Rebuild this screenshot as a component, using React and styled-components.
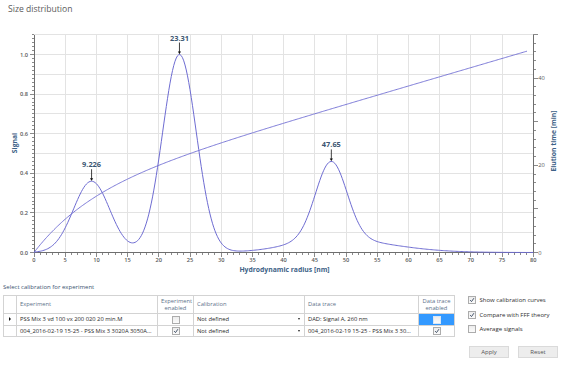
import React, { useMemo } from 'react';
import styled, { createGlobalStyle } from 'styled-components';

const Global = createGlobalStyle`
  html, body { margin: 0; padding: 0; background: #fff; }
  body { font-family: "Open Sans", "Noto Sans", sans-serif; }
`;

const Page = styled.div`
  width: 564px;
  height: 366px;
  overflow: hidden;
  background: #fff;
  display: flex;
  flex-direction: column;
`;

const Title = styled.div`
  height: 20px;
  line-height: 18px;
  padding-left: 8px;
  font-size: 8.6px;
  color: #5b5b5b;
`;

const Chart = styled.svg`
  display: block;
  width: 564px;
  height: 262px;
  flex: none;
`;

const Bottom = styled.div`
  display: flex;
  padding-left: 3px;
`;

const LeftPane = styled.div`
  width: 451px;
  display: flex;
  flex-direction: column;
`;

const SectionLabel = styled.div`
  height: 10px;
  line-height: 10px;
  margin-bottom: 3px;
  font-size: 6px;
  color: #3a5470;
`;

const Table = styled.table`
  border-collapse: collapse;
  table-layout: fixed;
  width: 451px;
  font-size: 5.8px;
  color: #1f1f1f;
`;

const Col = styled.col`
  width: ${(p) => p.$w}px;
`;

const HeadCell = styled.th`
  height: 17px;
  padding: 0 3px;
  border: 1px solid #d3d3d3;
  font-weight: normal;
  color: #5d7189;
  line-height: 7px;
  text-align: ${(p) => (p.$center ? 'center' : 'left')};
  vertical-align: middle;
`;

const Cell = styled.td`
  height: 10.7px;
  padding: 0 3px;
  border: 1px solid #d3d3d3;
  white-space: nowrap;
  overflow: hidden;
  text-overflow: clip;
  background: ${(p) => (p.$selected ? '#3399ff' : '#fff')};
  text-align: ${(p) => (p.$center ? 'center' : 'left')};
  vertical-align: middle;
  line-height: 8px;
`;

const RowHeadCell = styled(Cell)`
  padding: 0;
  text-align: center;
  font-size: 5px;
`;

const ComboInner = styled.div`
  display: flex;
  align-items: center;
  justify-content: space-between;
`;

const ComboArrow = styled.span`
  width: 0;
  height: 0;
  border-left: 1.6px solid transparent;
  border-right: 1.6px solid transparent;
  border-top: 2.2px solid #222;
  margin-right: 1px;
`;

const RowMarker = styled.span`
  display: inline-block;
  width: 0;
  height: 0;
  border-top: 2px solid transparent;
  border-bottom: 2px solid transparent;
  border-left: 2.6px solid #111;
`;

const BoxWrap = styled.span`
  display: inline-flex;
  align-items: center;
  justify-content: center;
  width: 6px;
  height: 6px;
  border: 1px solid ${(p) => (p.$onBlue ? '#d8e6f5' : '#acacac')};
  background: linear-gradient(#ececec, #fbfbfb);
  vertical-align: middle;
`;

const Options = styled.div`
  display: flex;
  flex-direction: column;
  margin-left: 14px;
  padding-top: 10.5px;
`;

const OptionRow = styled.label`
  display: flex;
  align-items: center;
  gap: 3.5px;
  height: 14.8px;
  font-size: 6px;
  color: #2d2d2d;
`;

const Buttons = styled.div`
  display: flex;
  gap: 9px;
  margin-top: 9.5px;
  margin-left: 1px;
`;

const Button = styled.button`
  width: 40px;
  height: 12px;
  padding: 0;
  border: 1px solid #dadada;
  background: #ededed;
  color: #555;
  font-family: inherit;
  font-size: 6px;
  line-height: 10px;
`;

function CheckBox({ checked, onBlue }) {
  return (
    <BoxWrap $onBlue={onBlue}>
      {checked && (
        <svg width="6" height="6" viewBox="0 0 6 6">
          <path d="M1.1 3.1 L2.5 4.6 L4.9 1.2" fill="none" stroke="#34455e" strokeWidth="0.9" />
        </svg>
      )}
    </BoxWrap>
  );
}

// chart geometry (page coordinates)
const X0 = 34;
const XS = 6.24;
const Y0 = 252.5;
const YS = 198;
const TS = 4.36;
const sx = (r) => X0 + r * XS;
const sy = (v) => Y0 - v * YS;
const st = (t) => Y0 - t * TS;
const TOP = sy(1.1);
const RIGHT = sx(80);

const g = (r, c, s) => Math.exp(-((r - c) * (r - c)) / (2 * s * s));
function signal(r) {
  const d = r - 47.65;
  const p3 = 0.39 * g(r, 47.65, 2.5) + 0.07 * Math.exp(-(d * d) / (2 * Math.pow(d < 0 ? 6.5 : 9, 2)));
  return 0.36 * g(r, 9.226, 2.9) + 1.0 * g(r, 23.31, 2.7) + p3;
}
function elution(r) {
  return 0.42 * r + 13 * (1 - Math.exp(-r / 9));
}

const GRID = '#e3e3e3';
const AXIS = '#6e6e6e';
const CURVE = '#6e6cd2';
const TICKTXT = '#5a5a5a';
const AXTITLE = '#3d6287';

function PeakLabel({ r, v, text, dy = 14 }) {
  const x = sx(r);
  const py = sy(v);
  const ty = py - dy;
  return (
    <g>
      <text x={x} y={ty} textAnchor="middle" fontSize="7.4" fontWeight="700" fill="#3c5672">
        {text}
      </text>
      <line x1={x} y1={ty + 2} x2={x} y2={py - 1} stroke="#111" strokeWidth="0.8" />
      <path d={`M${x - 1.6} ${py - 3} L${x + 1.6} ${py - 3} L${x} ${py - 0.4} Z`} fill="#111" />
    </g>
  );
}

function SizeChart() {
  const { sigPath, eluPath } = useMemo(() => {
    const s = [];
    const e = [];
    for (let i = 0; i <= 400; i++) {
      const r = i * 0.2;
      s.push(`${i ? 'L' : 'M'}${sx(r).toFixed(2)} ${sy(signal(r)).toFixed(2)}`);
      if (r <= 79) e.push(`${i ? 'L' : 'M'}${sx(r).toFixed(2)} ${st(elution(r)).toFixed(2)}`);
    }
    return { sigPath: s.join(''), eluPath: e.join('') };
  }, []);

  const vGrid = [];
  for (let r = 5; r < 80; r += 5) vGrid.push(r);
  const hGrid = [];
  for (let k = 1; k <= 11; k++) hGrid.push(k / 10);

  const leftTicks = [];
  for (let k = 0; k <= 55; k++) leftTicks.push(k);
  const bottomTicks = [];
  for (let k = 0; k <= 80; k++) bottomTicks.push(k);
  const rightTicks = [];
  for (let k = 0; k <= 50; k += 2) rightTicks.push(k);

  return (
    <Chart viewBox="0 20 564 262">
      <g shapeRendering="crispEdges">
        {vGrid.map((r) => (
          <line key={'v' + r} x1={sx(r)} y1={TOP} x2={sx(r)} y2={Y0} stroke={GRID} strokeWidth="1" />
        ))}
        {hGrid.map((v) => (
          <line key={'h' + v} x1={X0} y1={sy(v)} x2={RIGHT} y2={sy(v)} stroke={GRID} strokeWidth="1" />
        ))}
        <line x1={X0} y1={TOP} x2={X0} y2={Y0} stroke={AXIS} strokeWidth="1" />
        <line x1={X0} y1={Y0} x2={RIGHT} y2={Y0} stroke={AXIS} strokeWidth="1" />
        <line x1={RIGHT} y1={TOP} x2={RIGHT} y2={Y0} stroke={AXIS} strokeWidth="1" />
        {leftTicks.map((k) => (
          <line key={'lt' + k} x1={X0 - (k % 10 === 0 ? 4 : 2.5)} y1={sy(k * 0.02)} x2={X0} y2={sy(k * 0.02)} stroke={AXIS} strokeWidth="0.8" />
        ))}
        {bottomTicks.map((k) => (
          <line key={'bt' + k} x1={sx(k)} y1={Y0} x2={sx(k)} y2={Y0 + (k % 5 === 0 ? 4 : 2.5)} stroke={AXIS} strokeWidth="0.8" />
        ))}
        {rightTicks.map((k) => (
          <line key={'rt' + k} x1={RIGHT} y1={st(k)} x2={RIGHT + (k % 10 === 0 ? 4.5 : 3)} y2={st(k)} stroke={AXIS} strokeWidth="0.8" />
        ))}
      </g>

      {[0, 0.2, 0.4, 0.6, 0.8, 1.0].map((v) => (
        <text key={'ll' + v} x={28} y={sy(v) + 2} textAnchor="end" fontSize="5.7" fontWeight="600" fill={TICKTXT}>
          {v.toFixed(1)}
        </text>
      ))}
      {vGrid.concat([0, 80]).map((r) => (
        <text key={'bl' + r} x={sx(r)} y={262.3} textAnchor="middle" fontSize="5.7" fontWeight="600" fill={TICKTXT}>
          {r}
        </text>
      ))}
      {[0, 20, 40].map((t) => (
        <text key={'rl' + t} x={RIGHT + 5} y={st(t) + 2} fontSize="5.7" fill={TICKTXT}>
          {t}
        </text>
      ))}

      <text x={14} y={143} transform="rotate(-90 14 143)" textAnchor="middle" dominantBaseline="central" fontSize="6.8" fontWeight="700" fill={AXTITLE}>
        Signal
      </text>
      <text x={553} y={141} transform="rotate(-90 553 141)" textAnchor="middle" dominantBaseline="central" fontSize="6.8" fontWeight="700" fill={AXTITLE}>
        Elution time [min]
      </text>
      <text x={284.5} y={272.3} textAnchor="middle" fontSize="6.8" fontWeight="700" fill={AXTITLE}>
        Hydrodynamic radius [nm]
      </text>

      <path d={eluPath} fill="none" stroke={CURVE} strokeWidth="0.9" />
      <path d={sigPath} fill="none" stroke={CURVE} strokeWidth="1" />

      <PeakLabel r={9.226} v={0.36} text="9.226" />
      <PeakLabel r={23.31} v={1.0} text="23.31" />
      <PeakLabel r={47.65} v={0.46} text="47.65" />
    </Chart>
  );
}

export default function App() {
  return (
    <Page>
      <Global />
      <Title>Size distribution</Title>
      <SizeChart />
      <Bottom>
        <LeftPane>
          <SectionLabel>Select calibration for experiment</SectionLabel>
          <Table>
            <colgroup>
              <Col $w={13} />
              <Col $w={141} />
              <Col $w={36} />
              <Col $w={111} />
              <Col $w={114} />
              <Col $w={36} />
            </colgroup>
            <thead>
              <tr>
                <HeadCell />
                <HeadCell>Experiment</HeadCell>
                <HeadCell $center>Experiment enabled</HeadCell>
                <HeadCell>Calibration</HeadCell>
                <HeadCell>Data trace</HeadCell>
                <HeadCell $center>Data trace enabled</HeadCell>
              </tr>
            </thead>
            <tbody>
              <tr>
                <RowHeadCell>
                  <RowMarker />
                </RowHeadCell>
                <Cell>PSS Mix 3 vd 100 vx 200 020 20 min.M</Cell>
                <Cell $center>
                  <CheckBox />
                </Cell>
                <Cell>
                  <ComboInner>
                    <span>Not defined</span>
                    <ComboArrow />
                  </ComboInner>
                </Cell>
                <Cell>DAD: Signal A, 260 nm</Cell>
                <Cell $center $selected>
                  <CheckBox onBlue />
                </Cell>
              </tr>
              <tr>
                <RowHeadCell />
                <Cell>004_2016-02-19 15-25 - PSS Mix 3 3020A 3050A...</Cell>
                <Cell $center>
                  <CheckBox checked />
                </Cell>
                <Cell>
                  <ComboInner>
                    <span>Not defined</span>
                    <ComboArrow />
                  </ComboInner>
                </Cell>
                <Cell>004_2016-02-19 15-25 - PSS Mix 3 30...</Cell>
                <Cell $center>
                  <CheckBox checked />
                </Cell>
              </tr>
            </tbody>
          </Table>
        </LeftPane>
        <Options>
          <OptionRow>
            <CheckBox checked />
            Show calibration curves
          </OptionRow>
          <OptionRow>
            <CheckBox checked />
            Compare with FFF theory
          </OptionRow>
          <OptionRow>
            <CheckBox />
            Average signals
          </OptionRow>
          <Buttons>
            <Button>Apply</Button>
            <Button>Reset</Button>
          </Buttons>
        </Options>
      </Bottom>
    </Page>
  );
}
